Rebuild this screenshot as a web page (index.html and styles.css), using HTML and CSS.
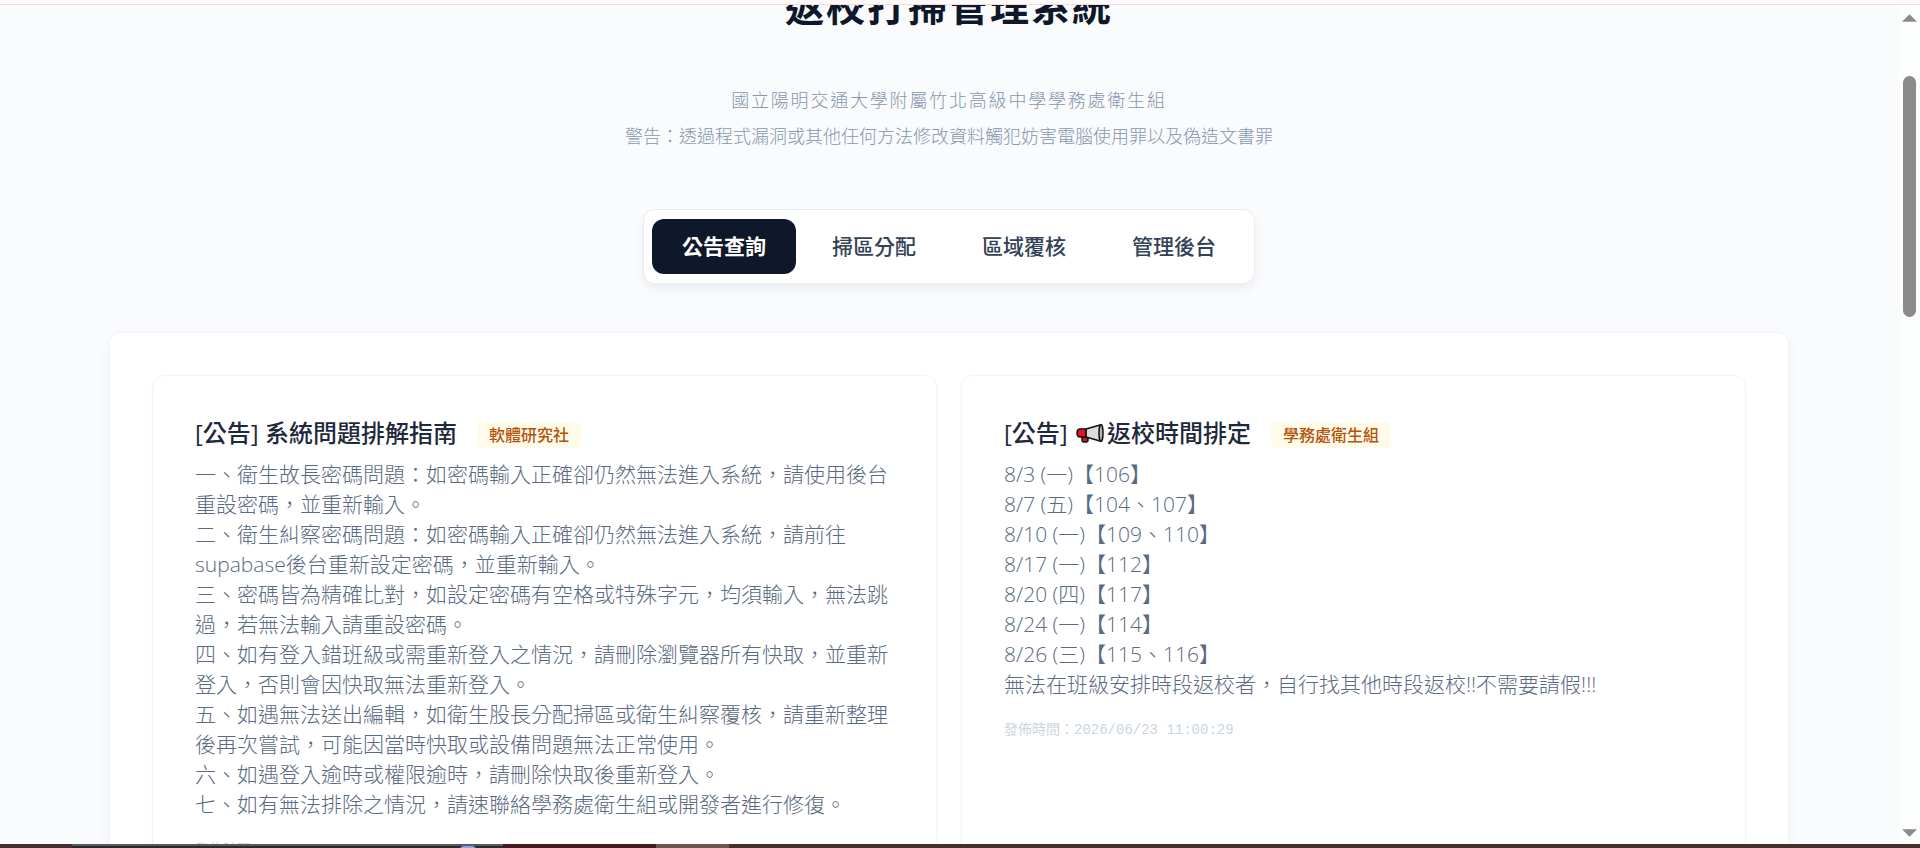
FILE: index.html
```
<!DOCTYPE html>
<html lang="zh-Hant">
<head>
  <meta charset="UTF-8">
  <title>返校打掃管理系統</title>
  <link rel="stylesheet" href="styles.css">
</head>
<body>

<div class="top-strip"></div>

<div class="window">
  <div class="page">
    <header>
      <h1>返校打掃管理系統</h1>
      <p class="school">國立陽明交通大學附屬竹北高級中學學務處衛生組</p>
      <p class="warning">警告：透過程式漏洞或其他任何方法修改資料觸犯妨害電腦使用罪以及偽造文書罪</p>
    </header>

    <nav class="tabs">
      <button class="active">公告查詢</button>
      <button>掃區分配</button>
      <button>區域覆核</button>
      <button>管理後台</button>
    </nav>

    <main>
      <article class="card">
        <div class="card-head">
          <h2>[公告] 系統問題排解指南</h2>
          <span class="badge">軟體研究社</span>
        </div>
        <p class="content">一、衛生故長密碼問題：如密碼輸入正確卻仍然無法進入系統，請使用後台重設密碼，並重新輸入。
二、衛生糾察密碼問題：如密碼輸入正確卻仍然無法進入系統，請前往supabase後台重新設定密碼，並重新輸入。
三、密碼皆為精確比對，如設定密碼有空格或特殊字元，均須輸入，無法跳過，若無法輸入請重設密碼。
四、如有登入錯班級或需重新登入之情況，請刪除瀏覽器所有快取，並重新登入，否則會因快取無法重新登入。
五、如遇無法送出編輯，如衛生股長分配掃區或衛生糾察覆核，請重新整理後再次嘗試，可能因當時快取或設備問題無法正常使用。
六、如遇登入逾時或權限逾時，請刪除快取後重新登入。
七、如有無法排除之情況，請速聯絡學務處衛生組或開發者進行修復。</p>
        <p class="time">發佈時間：</p>
      </article>

      <article class="card">
        <div class="card-head">
          <h2>[公告] <svg class="horn" viewBox="0 0 28 22" aria-hidden="true">
            <path d="M6 13v4q0 2 2 2h2q2 0 2-2v-4z" fill="#c4161c" stroke="#111" stroke-width="1.5" stroke-linejoin="round"/>
            <path d="M10 6L24 2v16L10 14z" fill="#dcdcdc" stroke="#111" stroke-width="1.5" stroke-linejoin="round"/>
            <path d="M10 6H4Q1 6 1 10t3 4h6z" fill="#e81224" stroke="#111" stroke-width="1.5"/>
            <ellipse cx="25" cy="10" rx="2" ry="8.5" fill="#b8b8b8" stroke="#111" stroke-width="1.5"/>
          </svg>返校時間排定</h2>
          <span class="badge">學務處衛生組</span>
        </div>
        <p class="content">8/3 (一)【106】
8/7 (五)【104、107】
8/10 (一)【109、110】
8/17 (一)【112】
8/20 (四)【117】
8/24 (一)【114】
8/26 (三)【115、116】
無法在班級安排時段返校者，自行找其他時段返校!!不需要請假!!!</p>
        <p class="time">發佈時間：2026/06/23 11:00:29</p>
      </article>
    </main>
  </div>

  <div class="scrollbar">
    <svg viewBox="0 0 16 8"><path d="M8 0l8 8H0z"/></svg>
    <div class="track"><div class="thumb"></div></div>
    <svg viewBox="0 0 16 8"><path d="M0 0h16L8 8z"/></svg>
  </div>
</div>

<div class="taskbar">
  <div class="search"><span class="orb"></span></div>
  <div class="app"></div>
  <div class="app open"></div>
</div>

</body>
</html>
```

FILE: styles.css
```
* {
  box-sizing: border-box;
}

body {
  margin: 0;
  height: 100vh;
  overflow: hidden;
  display: flex;
  flex-direction: column;
  background: #f9fbfd;
  color: #1e293b;
  font-family: "Open Sans", "Noto Sans CJK TC", sans-serif;
}

h1, h2, p {
  margin: 0;
}

.top-strip {
  height: 5px;
  background: #fffafa;
  border-bottom: 1px solid #f8d8d8;
}

.window {
  flex: 1;
  min-height: 0;
  display: flex;
}

.page {
  flex: 1;
  overflow: hidden;
}

/* the page is scrolled a little, so the title is cut by the window edge */
header {
  margin-top: -28px;
  text-align: center;
}

h1 {
  color: #0f172a;
  font-size: 39px;
  font-weight: 700;
  line-height: 58px;
  letter-spacing: 2px;
}

.school, .warning {
  color: #8896ac;
  font-size: 18px;
  font-weight: 300;
  line-height: 36px;
}

.school {
  margin-top: 47px;
  letter-spacing: 0.1em;
}

.tabs {
  width: fit-content;
  margin: 55px auto 48px;
  padding: 9px 8px;
  display: flex;
  gap: 6px;
  background: #fff;
  border: 1px solid #e8edf3;
  border-radius: 12px;
  box-shadow: 0 5px 10px rgba(0,0,0,0.06);
}

.tabs button {
  padding: 0 30px;
  border: none;
  border-radius: 12px;
  background: none;
  color: #334155;
  font-family: inherit;
  font-size: 21px;
  font-weight: 500;
  line-height: 55px;
  cursor: pointer;
}

.tabs button.active {
  background: #0f172a;
  color: #fff;
  font-weight: 700;
}

main {
  margin: 0 109px;
  padding: 42px;
  display: grid;
  grid-template-columns: 1fr 1fr;
  gap: 24px;
  background: #fff;
  border: 1px solid #f1f5f9;
  border-radius: 12px;
  box-shadow: 0 4px 14px rgba(0,0,0,0.04);
}

.card {
  padding: 41px 42px;
  border: 1px solid #f1f3f6;
  border-radius: 12px;
  box-shadow: 0 1px 3px rgba(0,0,0,0.03);
}

.card-head {
  display: flex;
  align-items: center;
  gap: 20px;
  margin-bottom: 10px;
}

.card-head h2 {
  font-size: 24px;
  font-weight: 500;
  line-height: 32px;
}

.horn {
  width: 28px;
  height: 22px;
  margin: 0 3px 0 2px;
  vertical-align: -3px;
}

.badge {
  margin-top: 4px;
  padding: 0 12px;
  border-radius: 6px;
  background: #fffbeb;
  box-shadow: 0 0 3px #fffbeb;
  color: #b45309;
  font-size: 16px;
  font-weight: 500;
  line-height: 26px;
}

.content {
  color: #5a6a82;
  font-size: 21px;
  font-weight: 300;
  line-height: 30px;
  white-space: pre-wrap;
}

.time {
  margin-top: 20px;
  color: #cbd5e1;
  font-family: "Liberation Mono", "Noto Sans CJK TC", monospace;
  font-size: 14px;
  line-height: 22px;
}

.scrollbar {
  width: 22px;
  padding: 9px 0 7px;
  display: flex;
  flex-direction: column;
  align-items: center;
  background: #fcfdfd;
}

.scrollbar svg {
  width: 15px;
  height: 8px;
  fill: #8a8a8a;
}

.track {
  flex: 1;
  padding-top: 54px;
}

.thumb {
  width: 13px;
  height: 32%;
  border-radius: 7px;
  background: #8a8a8a;
}

.taskbar {
  height: 4px;
  padding-left: 72px;
  display: flex;
  background: #45302e;
}

.search {
  width: 431px;
  position: relative;
  overflow: hidden;
  background: #2a2a2c;
  border-top: 2px solid #5a5a5c;
}

.orb {
  position: absolute;
  left: 384px;
  top: -1px;
  width: 24px;
  height: 24px;
  border-radius: 50%;
  background: #8ea2e8;
}

.app {
  width: 153px;
  background: #421a1d;
}

.app.open {
  width: 73px;
  background: #705450;
}
```
